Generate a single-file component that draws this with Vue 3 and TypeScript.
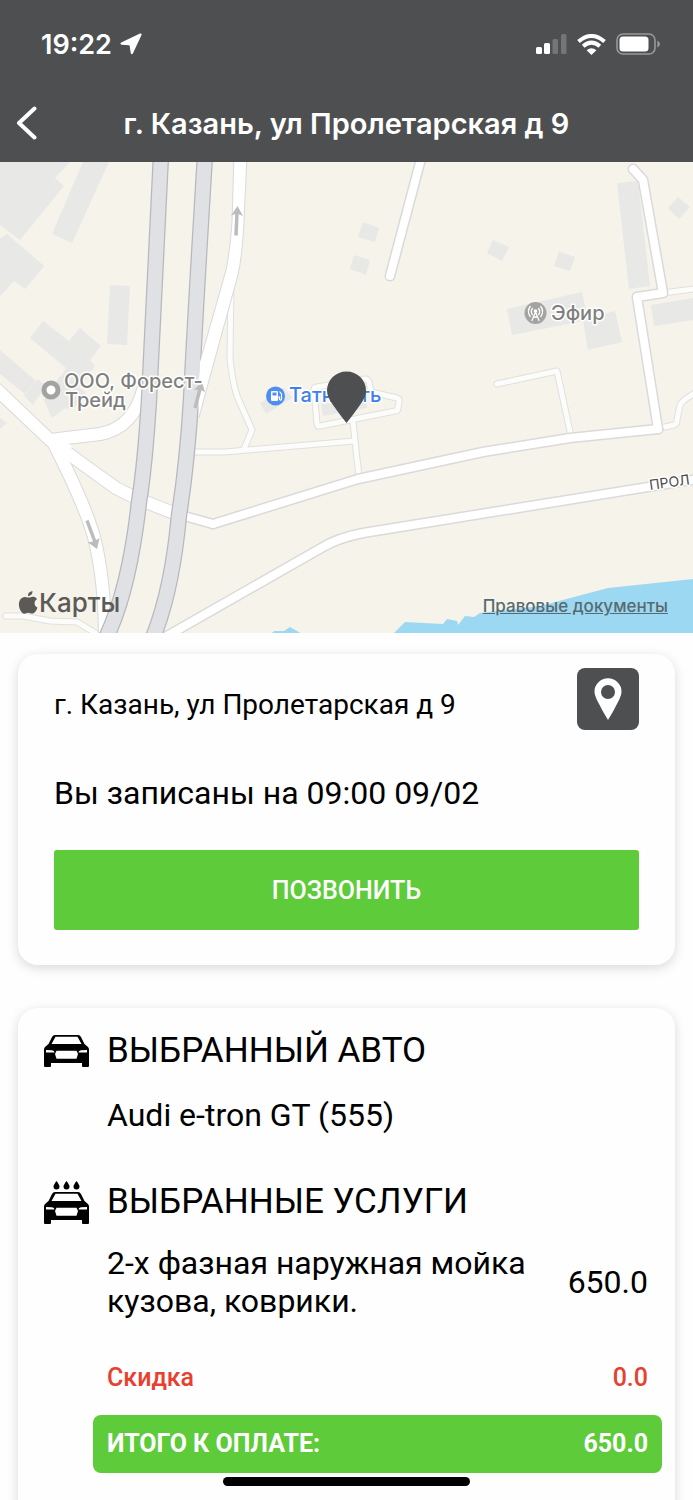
<script setup lang="ts">
interface Service {
  title: string
  price: string
}

const address = 'г. Казань, ул Пролетарская д 9'
const appointment = 'Вы записаны на 09:00 09/02'
const car = 'Audi e-tron GT (555)'
const services: Service[] = [
  { title: '2-х фазная наружная мойка кузова, коврики.', price: '650.0' },
]
const discount = '0.0'
const total = '650.0'

const buildings: string[] = [
  '0,162 70,162 55,178 64,186 20,240 0,225',
  '83,162 109,162 72,243 52,234',
  '7,234 44,266 25,289 14,281 0,296 0,239',
  '110,285 130,286 127,345 107,344',
  '43,321 30,338 66,368 60,378 78,388 95,366 90,360 101,346 80,328 69,341',
  '0,350 36,381 25,394 0,374',
  '38,379 46,386 33,405 24,396',
  '44,400 52,418 64,409 74,408 86,392 60,376',
  '0,418 7,423 0,429',
  '363,222 379,228 375,242 358,237',
  '354,255 370,260 366,275 350,269',
  '493,240 509,247 502,261 487,253',
  '559,251 575,257 570,271 554,266',
  '507,309 582,292 588,320 512,335',
  '583,320 615,311 622,342 588,350',
  '617,183 638,181 650,286 629,289',
  '678,197 690,207 679,219 668,208',
  '651,305 693,298 693,320 654,326',
  '260,403 284,388 292,398 266,414',
  '321,404 366,397 367,408 323,416',
]

const lanes: string[] = [
  'M231 285L230 358Q232 380 237 396L252 430L244 449',
  'M190 452H225L354 441',
  'M353 422L359 477',
  'M314 390Q314 387 317 387L365 379Q368 379 369 382L371 392L397 398Q400 399 399 402L398 408Q398 411 395 411L320 426Q317 427 317 424Z',
  'M497 384L557 371L571 436',
  'M663 293L700 288',
  'M660 428L674 425Q677 424 677 420L680 405Q682 400 700 390',
  'M6 616H23L50 621L77 622L102 637',
]

const streets: string[] = [
  'M422 155L390 276',
  'M633 169L643 180L663 293L637 297L658 429',
  'M213 524L358 479L483 452L570 438L658 429',
  'M160 640L323 547Q338 538 363 533L710 477',
]

const avenues: string[] = [
  'M-8 385L50 440L100 434Q133 428 143 390',
  'M50 440Q85 466 116 488Q134 498 174 513',
  'M52 440Q84 502 94 537Q105 580 105 640',
]
</script>

<template>
  <div class="screen">
    <header class="top">
      <div class="status">
        <div class="clock">
          <span>19:22</span>
          <svg class="loc" viewBox="0 0 22 22" aria-hidden="true">
            <path d="M20 .5Q22 0 21.500 2L13 20.300Q11.600 22.500 10.700 20L9.700 13Q9.600 12.400 9 12.300L1.400 11.700Q-.6 10.800 1.200 9.400Z" fill="#fff" />
          </svg>
        </div>
        <div class="indicators">
          <svg class="signal" viewBox="0 0 31 20" aria-hidden="true">
            <rect x="0" y="13" width="6" height="7" rx="1.5" fill="#fff" />
            <rect x="8" y="9" width="6" height="11" rx="1.5" fill="#fff" />
            <rect x="16.500" y="5" width="5.500" height="15" rx="1.5" fill="#747577" />
            <rect x="25" y="0" width="5.500" height="20" rx="1.5" fill="#747577" />
          </svg>
          <svg class="wifi" viewBox="0 0 29 21" aria-hidden="true">
            <g fill="none" stroke="#fff" stroke-width="4">
              <path d="M1.500 7.600Q14.500 -3.600 27.500 7.600" />
              <path d="M6.200 12.300Q14.500 5.100 22.800 12.300" />
            </g>
            <path d="M14.500 21L9.600 16.200Q14.500 12.200 19.400 16.200Z" fill="#fff" />
          </svg>
          <svg class="battery" viewBox="0 0 44 22" aria-hidden="true">
            <rect x="1" y="1" width="38" height="20" rx="6" fill="none" stroke="#98999b" stroke-width="1.600" />
            <rect x="3.500" y="3.500" width="29" height="15" rx="3.500" fill="#fff" />
            <path d="M41.300 7.500Q44 9 44 11T41.300 14.500Z" fill="#98999b" />
          </svg>
        </div>
      </div>
      <div class="nav">
        <button class="back" type="button" aria-label="Назад">
          <svg viewBox="0 0 22 34" aria-hidden="true">
            <path d="M18.500 2.500L3 17L18.500 31.500" fill="none" stroke="#fff" stroke-width="4" stroke-linecap="round" stroke-linejoin="round" />
          </svg>
        </button>
        <h1>{{ address }}</h1>
      </div>
    </header>

    <section class="map" aria-label="Карта">
      <svg class="canvas" viewBox="0 162 693 471" preserveAspectRatio="xMidYMid slice">
        <rect y="162" width="693" height="471" fill="#f6f3eb" />
        <polygon v-for="b in buildings" :key="b" :points="b" fill="#e8e8e7" />
        <path d="M392 635L405 622L443 624L447 619L457 621L458 625L465 616L474 617L480 613L540 606L608 588L693 579V635ZM271 634L274 631H284L290 627L302 634Z" fill="#9dd8f2" />

        <path v-for="l in lanes" :key="'a' + l" :d="l" class="road lane-edge" />
        <path v-for="l in lanes" :key="'b' + l" :d="l" class="road lane" />
        <path v-for="s in streets" :key="'a' + s" :d="s" class="road street-edge" />
        <path d="M170 512L213 524" class="road street-edge" />
        <path v-for="a in avenues" :key="'a' + a" :d="a" class="road avenue-edge" />
        <path v-for="s in streets" :key="'b' + s" :d="s" class="road street" />
        <path d="M170 512L213 524" class="road street" />
        <path v-for="a in avenues" :key="'b' + a" :d="a" class="road avenue" />
        <path d="M44 437L58 437L72 446L66 462Z" fill="#fff" />

        <g fill="none">
          <path d="M161 155Q153 320 149 400Q145 465 139 502Q129 592 105 640" stroke="#b6b8bc" stroke-width="16.500" />
          <path d="M161 155Q153 320 149 400Q145 465 139 502Q129 592 105 640" stroke="#e0e1e5" stroke-width="14" />
          <path d="M205 155Q195 320 191 400Q187 465 179 515Q172 592 152 640" stroke="#b6b8bc" stroke-width="16.500" />
          <path d="M205 155Q195 320 191 400Q187 465 179 515Q172 592 152 640" stroke="#e0e1e5" stroke-width="14" />
        </g>
        <path d="M234 155H247L244 222Q242 258 238 275L205 395L199 418L198 395L200 362L226 270Q230 250 232 222Z" fill="#fff" />
        <path d="M234 155L232 222Q230 250 226 270L201 358M247 155L244 222Q242 258 238 275L205 395L199 418" fill="none" stroke="#d9dadb" />

        <g fill="none" stroke="#bcbcbc" stroke-width="3.500">
          <path d="M236 235.500L237 213" />
          <path d="M195 408L200 389" />
          <path d="M87 520.500L95 542" />
        </g>
        <g fill="#bcbcbc">
          <path d="M231 215.500L237.500 206L243 216L237 213.500Z" />
          <path d="M194 390L202 382L205 392L200 389.500Z" />
          <path d="M88 542.500L97 549L99.500 538L94.500 541Z" />
        </g>

        <circle cx="51" cy="390" r="7" fill="#fff" stroke="#a3a3a1" stroke-width="5" />
        <circle cx="535.500" cy="313" r="11" fill="#a3a3a1" />
        <g fill="none" stroke="#fff" stroke-width="1.300" stroke-linecap="round">
          <path d="M535.500 312L532 320.500M535.500 312L539 320.500M534 317H537" />
          <path d="M532.400 314.500Q530.200 311.500 532.400 308.500M538.600 314.500Q540.800 311.500 538.600 308.500" />
          <path d="M530.200 316.500Q526.600 311.500 530.200 306.500M540.800 316.500Q544.400 311.500 540.800 306.500" />
        </g>
        <circle cx="535.500" cy="311" r="1.800" fill="#fff" />
        <circle cx="275.500" cy="396" r="9.500" fill="#4c8ff0" />
        <rect x="271" y="391" width="7" height="10" rx="1" fill="#fff" />
        <rect x="272.500" y="392.500" width="4" height="3" fill="#4c8ff0" />
        <path d="M278 397H279.500V399.500Q281.500 401 281.500 399V394L279.500 391.500" fill="none" stroke="#fff" stroke-width="1.200" />

        <g class="label">
          <text x="64" y="388">ООО, Форест-</text>
          <text x="65" y="407">Трейд</text>
          <text x="551" y="320">Эфир</text>
          <text x="289" y="402" class="blue">Татнефть</text>
          <text x="650" y="490" class="street-name" transform="rotate(-8 650 490)">ПРОЛ</text>
        </g>

        <path d="M346.500 423Q340 415 333 405Q327 397 327 390.500A19.500 19 0 0 1 366 390.500Q366 397 360 405Q353 415 346.500 423Z" fill="#4e4f51" />

        <g fill="#5b5a57">
          <path d="M28.500 597.500C31 597.500 32.500 596 35 597.200Q36.500 598 37 599Q34.300 600.700 34.500 603.500Q34.700 606.500 37.500 607.800Q36.500 611 34 613C31.800 614.500 30.500 612.800 28.300 612.800C26 612.800 25 614.500 22.800 613.200C19.500 610.500 18 605 19.500 601C21 597.500 24 596.700 26 597.200Z" />
          <path d="M28 596.200Q27.500 592 32.500 591Q32.700 595.500 28 596.200Z" />
          <text x="39" y="612" class="brand">Карты</text>
        </g>
      </svg>
      <a class="legal" href="#legal">Правовые документы</a>
    </section>

    <main class="content">
      <section class="card booking">
        <div class="place">
          <p class="address">{{ address }}</p>
          <button class="route" type="button" aria-label="Показать на карте">
            <svg viewBox="0 0 28 43" aria-hidden="true">
              <path fill-rule="evenodd" d="M14 42Q9 34 4 24Q.5 17.500 .5 13.500A13.500 13.200 0 0 1 27.500 13.500Q27.500 17.500 24 24Q19 34 14 42ZM14 7A7 7 0 1 0 14 21A7 7 0 1 0 14 7Z" fill="#fff" />
            </svg>
          </button>
        </div>
        <p class="time">{{ appointment }}</p>
        <button class="call" type="button">ПОЗВОНИТЬ</button>
      </section>

      <section class="card order">
        <div class="heading">
          <svg class="car" viewBox="0 0 45 32" aria-hidden="true">
            <path fill-rule="evenodd" d="M11 0H34Q36 0 37 2L40.500 9L44 12Q45 13 45 14.500V31Q45 32 44 32H39Q38 32 38 31V28H7V31Q7 32 6 32H1Q0 32 0 31V14.500Q0 13 1 12L4.500 9L8 2Q9 0 11 0ZM11.500 1.700L7.500 9H37.500L33.500 1.700ZM2 15V17.500H10.500Q10.500 15.500 8 15.200ZM43 15L37 15.200Q34.500 15.500 34.500 17.500H43ZM12.500 15.800L11 19L12.500 23.800H32.500L34 19L32.500 15.800Z" />
          </svg>
          <h2>ВЫБРАННЫЙ АВТО</h2>
        </div>
        <p class="model">{{ car }}</p>
        <div class="heading">
          <svg class="wash" viewBox="0 0 45 43" aria-hidden="true">
            <path d="M12.500 0Q15.500 4 15.500 5.500A3 3 0 0 1 9.500 5.500Q9.500 4 12.500 0ZM22.500 0Q25.500 4 25.500 5.500A3 3 0 0 1 19.500 5.500Q19.500 4 22.500 0ZM32.500 0Q35.500 4 35.500 5.500A3 3 0 0 1 29.500 5.500Q29.500 4 32.500 0Z" />
            <path transform="translate(0 11)" fill-rule="evenodd" d="M11 0H34Q36 0 37 2L40.500 9L44 12Q45 13 45 14.500V31Q45 32 44 32H39Q38 32 38 31V28H7V31Q7 32 6 32H1Q0 32 0 31V14.500Q0 13 1 12L4.500 9L8 2Q9 0 11 0ZM11.500 1.700L7.500 9H37.500L33.500 1.700ZM2 15V17.500H10.500Q10.500 15.500 8 15.200ZM43 15L37 15.200Q34.500 15.500 34.500 17.500H43ZM12.500 15.800L11 19L12.500 23.800H32.500L34 19L32.500 15.800Z" />
          </svg>
          <h2>ВЫБРАННЫЕ УСЛУГИ</h2>
        </div>
        <div v-for="s in services" :key="s.title" class="line service">
          <span>{{ s.title }}</span>
          <span>{{ s.price }}</span>
        </div>
        <div class="line discount">
          <span>Скидка</span>
          <span>{{ discount }}</span>
        </div>
        <div class="line total">
          <span>ИТОГО К ОПЛАТЕ:</span>
          <span>{{ total }}</span>
        </div>
      </section>
    </main>
    <div class="home-bar"></div>
  </div>
</template>

<style>
body {
  margin: 0;
  background: #fefefe;
}
</style>

<style scoped>
.screen {
  display: flex;
  flex-direction: column;
  height: 100vh;
  overflow: hidden;
  background: #fefefe;
  color: #000;
  font-family: Roboto, "Liberation Sans", sans-serif;
}

h1,
h2,
p {
  margin: 0;
  font-weight: 400;
}

button {
  border: 0;
  padding: 0;
  font-family: inherit;
  cursor: pointer;
}

svg {
  display: block;
}

.top {
  flex: none;
  background: #4e4f51;
  color: #fff;
  font-family: Inter, "Liberation Sans", sans-serif;
}

.status {
  display: flex;
  align-items: center;
  justify-content: space-between;
  height: 88px;
  padding: 0 33px 0 41px;
}

.clock {
  display: flex;
  align-items: center;
  gap: 8px;
  font-size: 27px;
  font-weight: 600;
}

.loc {
  width: 22px;
  height: 22px;
}

.indicators {
  display: flex;
  align-items: center;
  gap: 10px;
}

.signal {
  width: 31px;
  height: 20px;
}

.wifi {
  width: 29px;
  height: 21px;
}

.battery {
  width: 44px;
  height: 22px;
}

.nav {
  display: grid;
  grid-template-columns: 38px 1fr 38px;
  align-items: center;
  height: 70px;
  padding: 0 0 4px;
}

.back {
  padding-left: 16px;
  background: none;
}

.back svg {
  width: 22px;
  height: 34px;
}

.nav h1 {
  text-align: center;
  font-size: 29px;
  font-weight: 600;
  white-space: nowrap;
}

.map {
  position: relative;
  flex: none;
  height: 471px;
  overflow: hidden;
}

.canvas {
  width: 100%;
  height: 100%;
}

.road {
  fill: none;
  stroke-linejoin: round;
  stroke-linecap: round;
}

.lane-edge {
  stroke: #e0e0de;
  stroke-width: 7px;
}

.lane {
  stroke: #fcfcfb;
  stroke-width: 5px;
}

.street-edge {
  stroke: #dadadb;
  stroke-width: 11px;
}

.street {
  stroke: #fff;
  stroke-width: 8px;
}

.avenue-edge {
  stroke: #dadadb;
  stroke-width: 14px;
}

.avenue {
  stroke: #fff;
  stroke-width: 12px;
}

.label text {
  fill: #7f7f7e;
  stroke: #fff;
  stroke-width: 3px;
  stroke-linejoin: round;
  paint-order: stroke;
  font: 500 20px Inter, sans-serif;
}

.label .blue {
  fill: #4080e8;
}

.label .street-name {
  fill: #4b4b4b;
  font-size: 14px;
  font-weight: 400;
}

.brand {
  font: 500 26px Inter, sans-serif;
}

.legal {
  position: absolute;
  right: 25px;
  bottom: 17px;
  color: #566a70;
  font: 500 17px/20px Inter, sans-serif;
}

.content {
  display: flex;
  flex: 1;
  flex-direction: column;
  gap: 43px;
  padding: 21px 18px 0;
}

.card {
  border-radius: 20px;
  background: #fefefe;
  box-shadow: 0 3px 12px rgba(0, 0, 0, 0.15);
}

.booking {
  padding: 14px 36px 35px;
}

.place {
  display: flex;
  align-items: center;
  justify-content: space-between;
}

.address {
  padding-top: 12px;
  font-size: 28px;
  line-height: 40px;
}

.route {
  display: grid;
  place-items: center;
  width: 62px;
  height: 62px;
  border-radius: 8px;
  background: #4e4f51;
}

.route svg {
  width: 28px;
  height: 43px;
}

.time {
  margin-top: 43px;
  font-size: 32px;
  line-height: 40px;
}

.call {
  display: block;
  width: 100%;
  height: 80px;
  margin-top: 37px;
  border-radius: 3px;
  background: #5ecb3a;
  color: #fff;
  font-size: 25px;
  font-weight: 500;
}

.order {
  flex: 1 0 auto;
  margin-bottom: -40px;
  padding: 21px 27px 40px 26px;
}

.heading {
  display: grid;
  grid-template-columns: 45px 1fr;
  gap: 18px;
  align-items: center;
}

.heading h2 {
  font-size: 35px;
  line-height: 44px;
}

.car {
  width: 45px;
  height: 32px;
}

.wash {
  width: 45px;
  height: 43px;
}

.model {
  margin: 22px 0 45px 63px;
  font-size: 32px;
  line-height: 40px;
}

.line {
  display: flex;
  align-items: center;
  justify-content: space-between;
  gap: 40px;
  margin-left: 63px;
  font-size: 25px;
  line-height: 32px;
}

.service {
  margin-top: 20px;
  font-size: 32px;
  line-height: 38px;
}

.discount {
  margin-top: 42px;
  color: #e8402f;
  font-weight: 500;
}

.total {
  height: 58px;
  margin: 21px -14px 0 49px;
  padding: 0 14px;
  border-radius: 8px;
  background: #5ecb3a;
  color: #fff;
  font-weight: 700;
}

.home-bar {
  position: fixed;
  bottom: 14px;
  left: 50%;
  width: 247px;
  height: 9px;
  margin-left: -124px;
  border-radius: 5px;
  background: #000;
}
</style>
